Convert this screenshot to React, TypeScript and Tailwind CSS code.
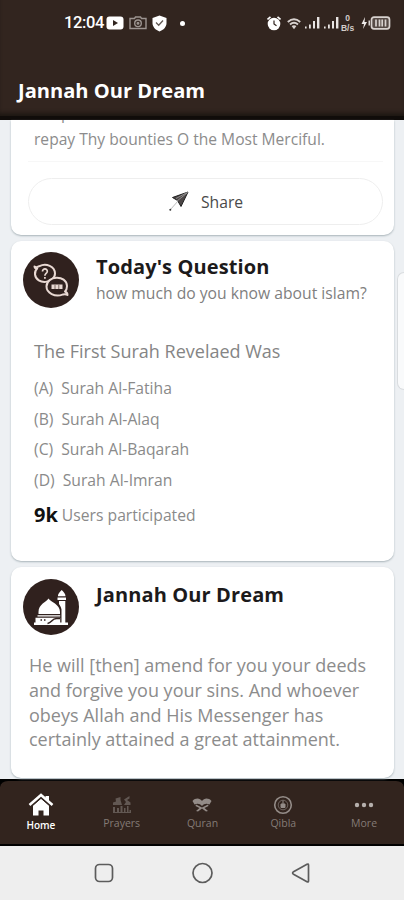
import type { ReactNode } from 'react';

interface CardHeaderProps {
  icon: ReactNode;
  title: string;
  subtitle?: string;
}

interface TabProps {
  icon: ReactNode;
  label: string;
  active?: boolean;
}

const answers = [
  { key: 'A', text: 'Surah Al-Fatiha' },
  { key: 'B', text: 'Surah Al-Alaq' },
  { key: 'C', text: 'Surah Al-Baqarah' },
  { key: 'D', text: 'Surah Al-Imran' },
];

const verse = [
  'He will [then] amend for you your deeds',
  'and forgive you your sins. And whoever',
  'obeys Allah and His Messenger has',
  'certainly attained a great attainment.',
];

const SignalIcon = () => (
  <svg width="17" height="14" viewBox="0 0 17 14" fill="#e8e4e2">
    <rect x="1" y="10.500" width="1.600" height="2" />
    <rect x="5" y="8.500" width="1.800" height="4" />
    <rect x="9" y="5" width="2" height="7.500" />
    <rect x="13" y="1" width="2.400" height="11.500" />
  </svg>
);

const StatusBar = () => (
  <div className="flex h-[46px] items-center pl-[64px] pr-[13px]">
    <span className="w-[41px] whitespace-nowrap font-[Roboto] text-[16.5px] font-medium leading-none tracking-[-0.4px] text-white">
      12:04
    </span>
    <svg className="ml-px" width="18" height="14" viewBox="0 0 18 14">
      <rect x="0.5" y="0.5" width="17" height="13" rx="3" fill="#fff" />
      <path d="M7 4v6l5-3z" fill="#30241f" />
    </svg>
    <svg className="ml-[5px]" width="18" height="14" viewBox="0 0 18 14" fill="none" stroke="#9c9490" strokeWidth="1.4">
      <path d="M1 12.500v-10h4.500l1-1.500h5l1 1.500H17v10z" />
      <circle cx="9" cy="7.300" r="3.300" />
      <circle cx="9" cy="7.300" r="0.800" />
    </svg>
    <svg className="ml-[4px]" width="17" height="17" viewBox="0 0 17 17">
      <path d="M8.500 0.500 15.500 3v5c0 4-3 7-7 8.500C4.500 15 1.500 12 1.500 8V3z" fill="#fff" />
      <path d="m5 7.500 2.700 2.700L12 5.500" fill="none" stroke="#625a55" strokeWidth="1.300" />
    </svg>
    <span className="ml-[12px] size-[5px] rounded-full bg-white" />
    <svg className="ml-auto" width="14" height="15" viewBox="0 0 14 15">
      <path d="M0.500 3.500 3.500 0.800M13.500 3.500 10.500 0.800" stroke="#fff" strokeWidth="1.600" />
      <circle cx="7" cy="8" r="6.300" fill="#fff" />
      <path d="M7 4.500V8l2.500 1.800" fill="none" stroke="#30241f" strokeWidth="1.200" />
    </svg>
    <svg className="ml-[6px] mt-[2px]" width="14" height="12" viewBox="0 0 14 12" fill="none" stroke="#d8d2cf" strokeWidth="1.900">
      <path d="M0.800 4Q7-1.500 13.200 4" />
      <path d="M3 6.500q4-3.500 8 0" />
      <path d="M4.600 8 7 11.300 9.400 8Q7 6.400 4.600 8z" fill="#d8d2cf" stroke="none" />
    </svg>
    <span className="ml-[3px] flex gap-[2px]">
      <SignalIcon />
      <SignalIcon />
    </span>
    <span className="flex w-[15px] flex-col items-center font-['Liberation_Sans',sans-serif] text-[8.500px] font-bold leading-[10px] text-[#d2ccc8]">
      <span>0</span>
      <span>B/s</span>
    </span>
    <svg className="ml-[6px]" width="30" height="14" viewBox="0 0 30 14">
      <path d="M4 1 0.500 8H3l-1 5 4-7H3.500z" fill="#f0ecea" />
      <path d="M7.500 4.500H9v5H7.500z" fill="#d8d2cf" />
      <rect x="10.500" y="1.200" width="18" height="11.600" rx="2.500" fill="#554a45" stroke="#d8d2cf" strokeWidth="1.700" />
      <path d="M15 3.500v7M18.500 3.500v7M21.200 3.500v7M24.500 3.500v7" stroke="#d8d2cf" strokeWidth="1.700" />
    </svg>
  </div>
);

const QuestionIcon = () => (
  <svg width="56" height="56" viewBox="0 0 56 56" fill="none" stroke="#e9d9d3" strokeWidth="2" strokeLinejoin="round">
    <path d="M11.500 14.500c2 1.500 3.500.5 5-.4C23 10.500 32 14.500 32 21.500c0 10-18.500 12-20 1-.3-3 .8-4.800 2.200-6-1.500 0-2.500-.8-2.700-2z" />
    <path d="M19.500 19.500c0-3.500 5-3.300 4.800 0-.2 2-2.400 2-2.400 4.200M21.900 25v1.800" strokeWidth="1.700" />
    <path d="M44.500 43c-2-1.500-3-1-5-.4C32 45.500 23.500 41 23.500 34.500c0-11 20-12 20.500-.5 0 3-.8 4.300-2 5.500 1.200.5 2.500 1.500 2.500 3.500z" fill="#30211e" />
    <path d="M28.500 32.500h11v4.500h-11z" fill="#e9d9d3" stroke="none" />
    <path d="M32 32.500v4.500M35.800 32.500v4.500" stroke="#7a6963" strokeWidth="1" />
  </svg>
);

const MosqueIcon = () => (
  <svg width="56" height="56" viewBox="0 0 56 56" fill="#fff">
    <path d="M25.500 19.500c2 3.500 11.500 5.500 11.500 13.500v2H15.500v-2c0-8 8-10 10-13.500z" />
    <path d="M38.700 11c2 2.200 3.800 3.500 3.800 6.300h-7.600c0-2.800 1.800-4.100 3.800-6.300z" />
    <path d="M34.500 18.500h8.500v2.500h-8.500zM36 22h6.300V44H38.500V30.500c-.5-2.500-1.300-4-2.500-5.500z" />
    <path d="M14.500 36.200h22.700v1.300H14.500zM12.500 38.700H37.200V44H12.500zM11 43.500h34V46H11z" />
    <path d="M17.500 41H19M21 41h1.500" stroke="#30211e" strokeWidth="1.500" />
    <path d="M24.500 44.500c4.500-.5 4-4.700 9-4.900h3.500" fill="none" stroke="#30211e" strokeWidth="1.500" />
  </svg>
);

const CardHeader = ({ icon, title, subtitle }: CardHeaderProps) => (
  <div className="flex gap-[17px] pl-3">
    <div className="size-14 shrink-0 rounded-full bg-[#30211e]">{icon}</div>
    <div className={subtitle ? 'whitespace-nowrap pt-px' : 'whitespace-nowrap pt-[2px]'}>
      <h2 className="text-[20px] font-bold leading-[28px] tracking-[0.12px] text-[#1c1a1b]">{title}</h2>
      {subtitle && <p className="text-[15.7px] leading-[24px] text-[#808080]">{subtitle}</p>}
    </div>
  </div>
);

const HomeIcon = () => (
  <svg width="26" height="24" viewBox="0 0 26 24">
    <path d="M5 12.500 13 5.500l8 7V22.500h-5.500V17.500h-5v5H5z" fill="#fff" />
    <path d="M17.500 3H21v6l-3.500-3z" fill="#fff" />
    <path d="M1.500 12 13 2l11.500 10" fill="none" stroke="#fff" strokeWidth="2.500" />
    <path d="M3.500 13.500 13 5.300l9.500 8.200" fill="none" stroke="#30231e" strokeWidth="1" />
  </svg>
);

const PrayersIcon = () => (
  <svg width="20" height="20" viewBox="0 0 20 20" fill="#625853">
    <path d="M3.500 3.500 8.500 2v3L10 10H1V7.500l3-1zM12 4.500 17.500 1v2.500L15 5l3.500 2.500V10H12l2-3z" />
    <path d="M1 12h2v6H1zM5 13h2v5H5zM8.500 11h2v7h-2zM12 13h1.500v5H12zM15 11h1.500v7H15zM17.500 15H19v3h-1.500zM1 17h18v1H1z" />
  </svg>
);

const QuranIcon = () => (
  <svg width="20" height="16" viewBox="0 0 20 16" fill="#938b87">
    <path d="M0.500 4c3-3.500 7.500-3 9.500 0 2-3 6.500-3.500 9.500 0L17.500 7.500C14 6 12 7 10 9 8 7 6 6 2.500 7.500z" />
    <path d="m4 7.500 6 3 6-3 .5 1.500-4 2 3.500 3-2 .5-4-3-4 3-2-.5 3.500-3-4-2z" />
  </svg>
);

const QiblaIcon = () => (
  <svg width="20" height="20" viewBox="0 0 20 20" fill="none" stroke="#948c88">
    <circle cx="10" cy="10" r="8.300" strokeWidth="1.600" />
    <circle cx="10" cy="10" r="4.800" strokeWidth="0.600" />
    <path d="M8 9h4v3.500H8zM10 5.500V9" strokeWidth="1" fill="#948c88" />
  </svg>
);

const MoreIcon = () => (
  <svg width="20" height="6" viewBox="0 0 20 6" fill="#b6b0ad">
    <circle cx="3" cy="3" r="2.200" />
    <circle cx="10" cy="3" r="2.200" />
    <circle cx="17" cy="3" r="2.200" />
  </svg>
);

const Tab = ({ icon, label, active }: TabProps) => (
  <div className="flex w-[80.8px] flex-col items-center pl-px pt-3">
    <div className="flex h-6 items-center">{icon}</div>
    {active ? (
      <span className="mt-[2px] text-[10px] font-semibold leading-3 text-white">{label}</span>
    ) : (
      <span className="text-[10.5px] leading-3 text-[#847b76]">{label}</span>
    )}
  </div>
);

export default function App() {
  return (
    <div className="flex h-[900px] w-[404px] flex-col overflow-hidden bg-[#edf0f3] font-['Open_Sans',sans-serif]">
      <header className="h-[120px] shrink-0 border-b-4 border-[#100c0a] bg-[#32251f] shadow-[inset_0_-5px_4px_-2px_#1d1713]">
        <StatusBar />
        <h1 className="mt-[31px] whitespace-nowrap pl-[18px] text-[20.1px] font-bold leading-7 text-white">Jannah Our Dream</h1>
      </header>

      <main className="relative flex h-[659px] shrink-0 flex-col gap-[6px] pl-[11px] pr-[10px]">
        <section className="h-[115px] shrink-0 overflow-hidden rounded-b-[10px] bg-white pl-[17px] pr-[11px] shadow-[0_1px_2px_#a9b4b9]">
          <div className="h-[42px] overflow-hidden whitespace-nowrap border-b border-[#f7f7f7] pl-[6px] text-[15.6px] leading-[26px] text-[#8c8c8c]">
            {/* tail of the line scrolled under the header */}
            <p className="-mt-[19px] pl-[27px] leading-[24px]">p</p>
            <p className="pt-px">repay Thy bounties O the Most Merciful.</p>
          </div>
          <button className="mt-4 flex h-[47px] w-full items-center rounded-full border border-[#eeeeee] pl-[139px] text-[15.7px] text-[#4a4a4a]">
            <svg width="21" height="21" viewBox="0 0 21 21">
              <path d="M20 1 4.500 6.500l5 3 3.500 6z" fill="#4c4646" stroke="#202020" />
              <path d="M19 2 9 10M20 1 8 7.500" stroke="#aaa" strokeWidth="0.700" />
              <path d="m10 10-7.500 8.500" stroke="#aaa" strokeWidth="0.800" />
              <circle cx="2.300" cy="18.700" r="1" fill="#333" />
            </svg>
            <span className="ml-[12px] pt-[2px]">Share</span>
          </button>
        </section>

        <section className="h-[320px] shrink-0 rounded-[10px] bg-white pt-[11px] shadow-[0_1px_2px_#a9b4b9]">
          <CardHeader icon={<QuestionIcon />} title="Today's Question" subtitle="how much do you know about islam?" />
          <div className="whitespace-nowrap pl-[23px] pt-[29px] text-[15.7px] text-[#8a8a8a]">
            <p className="text-[18px] leading-[28px] text-[#858585]">The First Surah Revelaed Was</p>
            <ul className="pt-[9px]">
              {answers.map((answer) => (
                <li key={answer.key} className="flex h-[30.4px] items-center gap-[8px]">
                  <span>({answer.key})</span>
                  <span>{answer.text}</span>
                </li>
              ))}
            </ul>
            <p className="flex h-[38px] items-center gap-[4px]">
              <b className="text-[20px] text-[#111111]">9k</b>
              <span className="pt-[3px]">Users participated</span>
            </p>
          </div>
        </section>

        <section className="h-[211px] shrink-0 rounded-[10px] bg-white pt-3 shadow-[0_1px_2px_#a9b4b9]">
          <CardHeader icon={<MosqueIcon />} title="Jannah Our Dream" />
          <div className="whitespace-nowrap pl-[18px] pt-[18px] text-[18px] leading-[24.8px] text-[#8c8c8c]">
            {verse.map((line) => (
              <p key={line}>{line}</p>
            ))}
          </div>
        </section>

        {/* edge handle of the phone's side panel */}
        <div className="absolute right-0 top-[152px] h-[118px] w-[7px] rounded-l-[8px] border border-r-0 border-[#d9dcdf] bg-[#f9fafb]" />
      </main>

      <div className="h-[67px] shrink-0 bg-black">
        <nav className="flex h-full rounded-t-[8px] border-b-2 border-t-2 border-black bg-[#32241e]">
          <Tab icon={<HomeIcon />} label="Home" active />
          <Tab icon={<PrayersIcon />} label="Prayers" />
          <Tab icon={<QuranIcon />} label="Quran" />
          <Tab icon={<QiblaIcon />} label="Qibla" />
          <Tab icon={<MoreIcon />} label="More" />
        </nav>
      </div>

      <footer className="flex grow items-center bg-[#eeeeee] pl-[94px]">
        <svg width="220" height="24" viewBox="0 0 220 24" fill="none" stroke="#5c5c5c" strokeWidth="1.700" strokeLinejoin="round">
          <rect x="1.500" y="3.500" width="17" height="17" rx="4" />
          <circle cx="108.500" cy="12" r="9.500" />
          <path d="M214.500 4v16q0 1.500-1.500.7L199.500 13.200q-1.800-1.200 0-2.400l13.500-7.500q1.500-.8 1.500.7z" />
        </svg>
      </footer>
    </div>
  );
}
